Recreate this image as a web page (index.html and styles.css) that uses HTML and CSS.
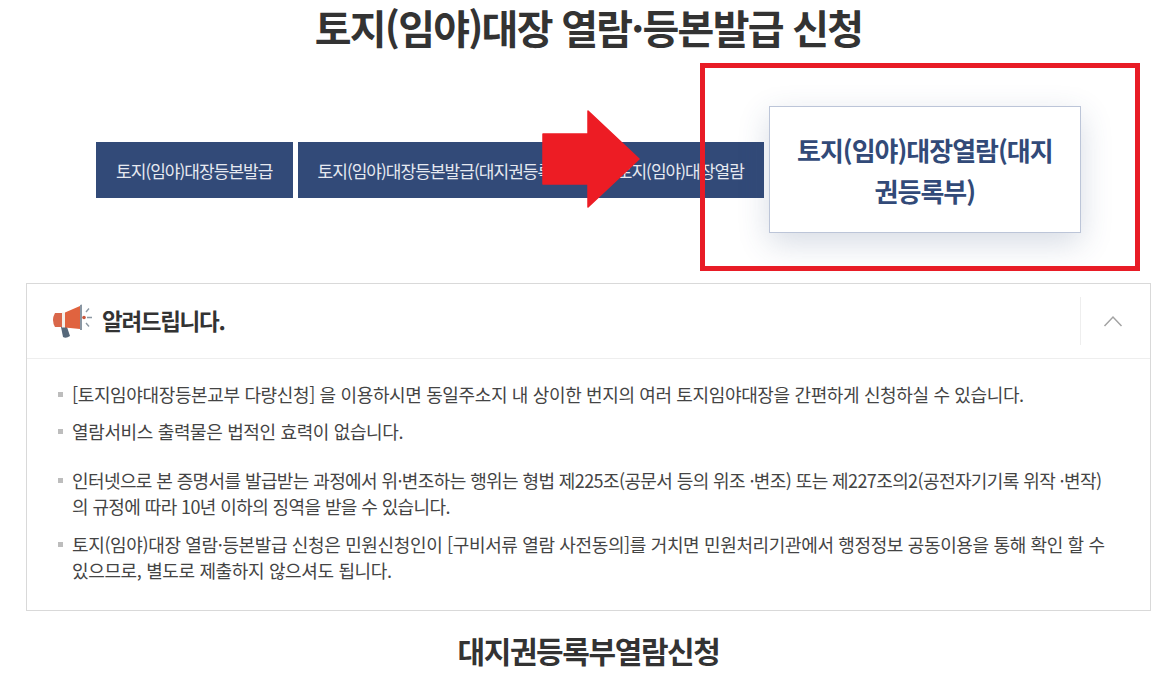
FILE: index.html
```html
<!DOCTYPE html>
<html lang="ko">
<head>
    <meta charset="UTF-8">
    <title>토지(임야)대장 열람·등본발급 신청</title>
    <link rel="stylesheet" href="styles.css">
</head>
<body>
    <h1 class="page-title">토지(임야)대장 열람·등본발급 신청</h1>

    <!-- 탭 메뉴 -->
    <div class="tabs">
        <a class="tab">토지(임야)대장등본발급</a>
        <a class="tab">토지(임야)대장등본발급(대지권등록부)</a>
        <a class="tab">토지(임야)대장열람</a>
        <a class="tab-active">토지(임야)대장열람(대지권등록부)</a>
        <svg class="arrow" width="100" height="98" viewBox="0 0 100 98">
            <path d="M1 24H46V1L97 49L46 97V74H1Z" fill="#ed1c24" stroke="#ed1c24" stroke-width="1.5" stroke-linejoin="round"/>
        </svg>
        <div class="red-box"></div>
    </div>

    <!-- 알려드립니다 -->
    <div class="notice">
        <div class="notice-head">
            <svg class="notice-icon" width="42" height="36" viewBox="0 0 42 36">
                <path d="M11 24H17L20 33Q16 36 13 34Z" fill="#56687a"/>
                <path d="M5 10H12V24H5Q1 17 5 10Z" fill="#d9674a"/>
                <rect x="12" y="9.500" width="3" height="15" fill="#f4efe9"/>
                <path d="M15 9.500L30 3V26L15 24.500Z" fill="#e0633f"/>
                <path d="M30 2L32 1.500V27L30 27Z" fill="#8a97a3"/>
                <circle cx="34" cy="14.500" r="1.800" fill="#c9573c"/>
                <path d="M36 9L39 5.500M37 14.500H42M36 20L39 23.500" stroke="#8d99a3" stroke-width="1.400" fill="none"/>
            </svg>
            <strong class="notice-title">알려드립니다.</strong>
            <div class="notice-toggle">
                <svg width="20" height="12" viewBox="0 0 20 12"><path d="M1.500 11L10 2L18.500 11" fill="none" stroke="#a3a3a3" stroke-width="1.500"/></svg>
            </div>
        </div>
        <ul class="notice-list">
            <li>[토지임야대장등본교부 다량신청] 을 이용하시면 동일주소지 내 상이한 번지의 여러 토지임야대장을 간편하게 신청하실 수 있습니다.</li>
            <li>열람서비스 출력물은 법적인 효력이 없습니다.</li>
            <li class="gap">인터넷으로 본 증명서를 발급받는 과정에서 위·변조하는 행위는 형법 제225조(공문서 등의 위조 ·변조) 또는 제227조의2(공전자기기록 위작 ·변작)의 규정에 따라 10년 이하의 징역을 받을 수 있습니다.</li>
            <li>토지(임야)대장 열람·등본발급 신청은 민원신청인이 [구비서류 열람 사전동의]를 거치면 민원처리기관에서 행정정보 공동이용을 통해 확인 할 수 있으므로, 별도로 제출하지 않으셔도 됩니다.</li>
        </ul>
    </div>

    <h2 class="sub-title">대지권등록부열람신청</h2>
</body>
</html>
```

FILE: styles.css
```css
html, body {
    height: 692px;
    overflow: hidden;
}
body {
    margin: 0;
    background: #fff;
    font-family: "Noto Sans CJK KR", "Noto Sans", sans-serif;
    color: #333;
}
.page-title {
    margin: 0;
    height: 62px;
    padding: 2px 0 0 8px;
    box-sizing: border-box;
    line-height: 50px;
    text-align: center;
    font-size: 40px;
    font-weight: 700;
    letter-spacing: -1.750px;
}
.tabs {
    position: relative;
    height: 208px;
    display: flex;
    align-items: flex-start;
    padding: 44px 0 0 96px;
    box-sizing: border-box;
}
.tab {
    flex: none;
    display: flex;
    align-items: center;
    height: 56px;
    margin-top: 36px;
    margin-right: 5px;
    padding: 0 20px;
    background: #324a78;
    color: #e6e9f0;
    font-size: 17px;
    letter-spacing: -0.950px;
    white-space: nowrap;
}
.tab:nth-child(3) {
    margin-right: 0;
}
.tab-active {
    flex: none;
    box-sizing: border-box;
    width: 312px;
    height: 127px;
    margin-left: 5px;
    padding: 0 20px;
    display: flex;
    align-items: center;
    text-align: center;
    background: #fff;
    border: 1px solid #bcc5d8;
    box-shadow: 0 10px 30px rgba(50, 74, 120, 0.2);
    color: #324a78;
    font-size: 26px;
    font-weight: 700;
    line-height: 41px;
    letter-spacing: -1px;
    word-break: break-all;
}
.arrow {
    position: absolute;
    left: 542px;
    top: 48px;
}
.red-box {
    position: absolute;
    left: 700px;
    top: 1px;
    width: 440px;
    height: 208px;
    box-sizing: border-box;
    border: 5px solid #e81c26;
}
.notice {
    margin: 13px 18px 0 26px;
    height: 328px;
    box-sizing: border-box;
    border: 1px solid #d9d9d9;
}
.notice-head {
    display: flex;
    align-items: center;
    height: 74px;
    padding-left: 23px;
    border-bottom: 1px solid #eee;
}
.notice-icon {
    margin-right: 10px;
}
.notice-title {
    font-size: 22.500px;
    font-weight: 700;
    letter-spacing: -1.300px;
    color: #333;
    margin-top: -3px;
}
.notice-toggle {
    margin-left: auto;
    width: 70px;
    height: 48px;
    padding-right: 5px;
    box-sizing: border-box;
    display: flex;
    align-items: center;
    justify-content: center;
    border-left: 1px solid #eee;
}
.notice-list {
    list-style: none;
    margin: 0;
    padding: 22px 40px 0 45px;
    font-size: 18px;
    line-height: 26px;
    letter-spacing: -0.360px;
    color: #444;
}
.notice-list li {
    position: relative;
    margin-bottom: 11px;
}
.notice-list li::before {
    content: "";
    position: absolute;
    left: -14px;
    top: 11px;
    width: 5px;
    height: 5px;
    background: #bdbdbd;
}
.notice-list li.gap {
    margin-top: 23px;
    margin-bottom: 12px;
    letter-spacing: -0.600px;
}
.sub-title {
    margin: 17px 0 0;
    padding-left: 8px;
    text-align: center;
    font-size: 30px;
    font-weight: 700;
    letter-spacing: -1.400px;
    color: #333;
}
```
